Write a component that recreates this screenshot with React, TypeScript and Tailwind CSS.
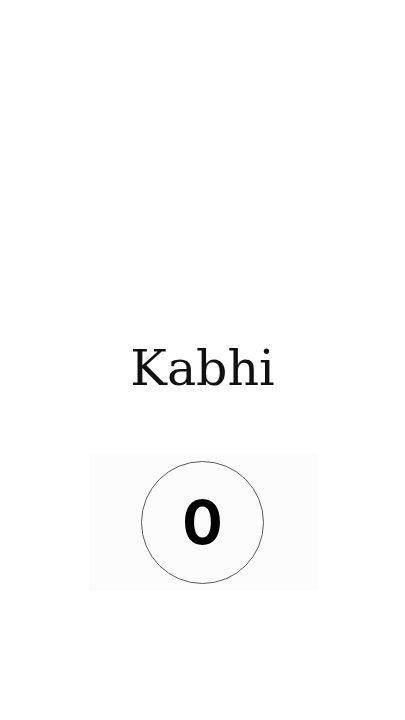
export default function App() {
  return (
    <main className="flex min-h-screen flex-col items-center bg-white pt-[344px]">
      <h1 className="text-[49px] leading-none text-[#111] [font-family:'DejaVu_Serif',serif]">
        Kabhi
      </h1>
      <section className="mt-[60px] flex h-[138px] w-[228px] items-center justify-center bg-[#fcfcfc]">
        <div className="flex h-[123px] w-[123px] items-center justify-center rounded-full border border-[#5a5a5a]">
          <span className="text-[60px] font-bold leading-none text-black [font-family:Inter,sans-serif]">
            0
          </span>
        </div>
      </section>
    </main>
  );
}
